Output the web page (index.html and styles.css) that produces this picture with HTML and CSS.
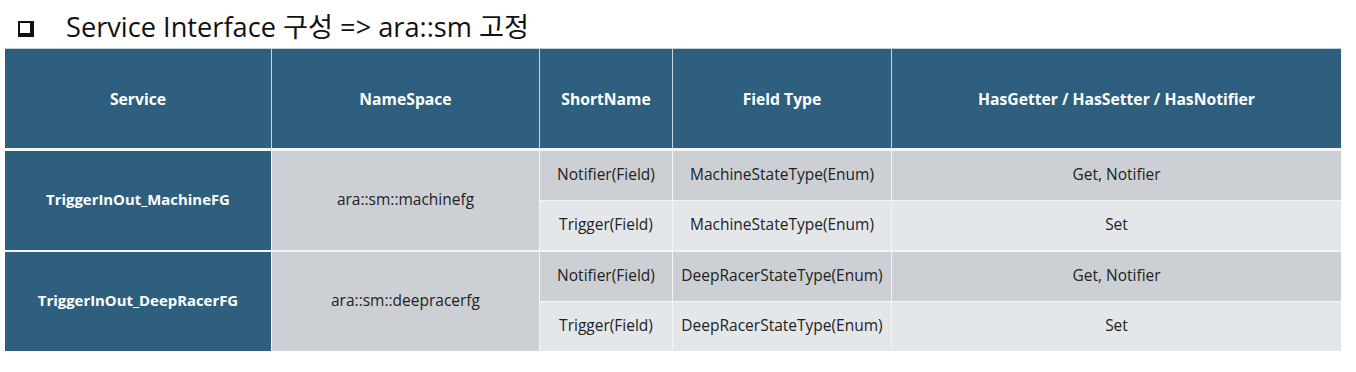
FILE: index.html
```html
<!DOCTYPE html>
<html lang="ko">
<head>
<meta charset="utf-8">
<link rel="stylesheet" href="styles.css">
</head>
<body>
<div class="page">
  <h1 class="title"><span class="box"></span><span class="title-text">Service Interface 구성 =&gt; ara::sm 고정</span></h1>
  <div class="table">
    <div class="grid head">
      <div class="cell">Service</div>
      <div class="cell">NameSpace</div>
      <div class="cell">ShortName</div>
      <div class="cell">Field Type</div>
      <div class="cell">HasGetter / HasSetter / HasNotifier</div>
    </div>
    <div class="grid group">
      <div class="cell svc">TriggerInOut_MachineFG</div>
      <div class="cell ns">ara::sm::machinefg</div>
      <div class="cell dark">Notifier(Field)</div>
      <div class="cell dark">MachineStateType(Enum)</div>
      <div class="cell dark">Get, Notifier</div>
      <div class="cell light">Trigger(Field)</div>
      <div class="cell light">MachineStateType(Enum)</div>
      <div class="cell light">Set</div>
    </div>
    <div class="grid group second">
      <div class="cell svc">TriggerInOut_DeepRacerFG</div>
      <div class="cell ns">ara::sm::deepracerfg</div>
      <div class="cell dark">Notifier(Field)</div>
      <div class="cell dark">DeepRacerStateType(Enum)</div>
      <div class="cell dark">Get, Notifier</div>
      <div class="cell light">Trigger(Field)</div>
      <div class="cell light">DeepRacerStateType(Enum)</div>
      <div class="cell light">Set</div>
    </div>
  </div>
</div>
</body>
</html>
```

FILE: styles.css
```css
html, body {
  margin: 0;
  padding: 0;
  background: #ffffff;
}
body {
  font-family: "Open Sans", "Noto Sans CJK KR", sans-serif;
  color: #222;
}
.page {
  width: 1356px;
  height: 372px;
  overflow: hidden;
}
.title {
  margin: 0;
  height: 48px;
  display: flex;
  align-items: flex-start;
  padding: 13px 0 0 18px;
  box-sizing: border-box;
  font-size: 27.2px;
  line-height: 27px;
  font-weight: 400;
  color: #111;
}
.box {
  width: 10px;
  height: 10px;
  margin-top: 8px;
  border: 2px solid #111;
  border-right-width: 4px;
  border-bottom-width: 4px;
  margin-right: 32px;
  flex: none;
}
.title-text {
  white-space: nowrap;
}
.table {
  margin-left: 5px;
  width: 1336px;
  display: flex;
  flex-direction: column;
  background: #f3f5f7;
}
.grid {
  display: grid;
  grid-template-columns: 266px 267px 132px 218px 449px;
  column-gap: 1px;
  row-gap: 1px;
}
.head {
  grid-template-rows: 99px;
  background: #c9d6e0;
  border-top: 1px solid #c3d0da;
}
.group {
  grid-template-rows: 49px 49px;
  margin-top: 3px;
}
.group.second {
  margin-top: 2px;
}
.cell {
  display: flex;
  align-items: center;
  justify-content: center;
  text-align: center;
  font-size: 15.5px;
  padding-bottom: 3px;
  box-sizing: border-box;
}
.head .cell {
  background: #2e5f7f;
  color: #fff;
  font-weight: 700;
  font-size: 15.7px;
  padding-bottom: 0;
}
.svc {
  grid-row: span 2;
  background: #2e5f7f;
  color: #fff;
  font-weight: 700;
  font-size: 14.9px;
}
.ns {
  grid-row: span 2;
  background: #ccd0d4;
}
.dark {
  background: #ccd0d4;
}
.light {
  background: #e4e7ea;
}
```
